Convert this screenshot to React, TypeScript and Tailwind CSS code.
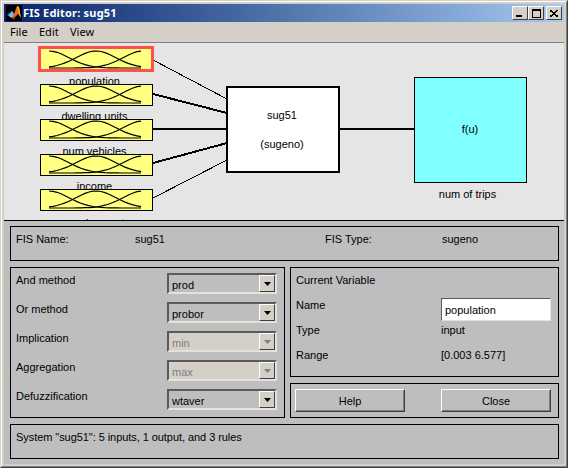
const sans = "font-['Liberation_Sans',Arial,sans-serif]";

// three gaussian membership curves, as the FIS editor draws them in each input box
function mfPoints(center: number) {
  const pts: string[] = [];
  for (let x = 8; x <= 102; x += 4) {
    const y = 18 - 17 * Math.exp(-((x - center) ** 2) / 800);
    pts.push(`${x},${y.toFixed(1)}`);
  }
  return pts.join(' ');
}

function InputNode({ top, selected }: { top: number; selected?: boolean }) {
  return (
    <div
      className={
        selected
          ? 'absolute left-[34px] w-[116px] h-[26px] border-[3px] border-[#ff5050] bg-[#ffff80]'
          : 'absolute left-[36px] w-[113px] h-[22px] border border-black bg-[#ffff80]'
      }
      style={{ top }}
    >
      <svg
        width="104"
        height="20"
        className={selected ? 'absolute left-0 top-[1px] overflow-visible' : 'absolute left-0 top-0 overflow-visible'}
      >
        <polyline points={mfPoints(8)} fill="none" stroke="#000" strokeWidth="1.2" />
        <polyline points={mfPoints(55)} fill="none" stroke="#000" strokeWidth="1.2" />
        <polyline points={mfPoints(102)} fill="none" stroke="#000" strokeWidth="1.2" />
      </svg>
    </div>
  );
}

function NodeLabel({ top, children }: { top: number; children: string }) {
  return (
    <div className="absolute left-[34px] w-[113px] text-center leading-[14px]" style={{ top }}>
      {children}
    </div>
  );
}

function Combo({ value, disabled }: { value: string; disabled?: boolean }) {
  return (
    <div
      className={`w-[110px] h-[21px] flex items-stretch border-2 border-t-[#5a5a5a] border-l-[#5a5a5a] border-r-[#e4e2dc] border-b-[#e4e2dc] ${
        disabled ? 'bg-[#d4d0c8] text-[#808080]' : 'bg-[#bebebe] text-black'
      }`}
    >
      <div className="flex-1 pl-[3px] pt-[3px] leading-[14px]">{value}</div>
      <div className="w-[16px] flex items-center justify-center bg-[#d4d0c8] border border-t-white border-l-white border-r-[#404040] border-b-[#404040]">
        <svg width="7" height="4" viewBox="0 0 7 4">
          <polygon points="0,0 7,0 3.5,4" fill={disabled ? '#808080' : '#000'} />
        </svg>
      </div>
    </div>
  );
}

function CaptionButton({ children, className }: { children: React.ReactNode; className?: string }) {
  return (
    <div
      className={`w-[16px] h-[14px] bg-[#d4d0c8] border border-t-white border-l-white border-r-[#404040] border-b-[#404040] flex ${className ?? ''}`}
    >
      {children}
    </div>
  );
}

function PushButton({ label }: { label: string }) {
  return (
    <button
      type="button"
      className="w-[110px] h-[23px] bg-[#bebebe] border border-t-white border-l-white border-r-[#404040] border-b-[#404040] shadow-[inset_-1px_-1px_0_#808080] leading-[14px]"
    >
      {label}
    </button>
  );
}

function MatlabIcon() {
  return (
    <svg width="16" height="16" viewBox="0 0 16 16" className="bg-black shrink-0">
      <polygon points="1,10 6,6 8,9 6,13" fill="#2d8fd5" />
      <polygon points="6,6 8,9 6,13 3,11" fill="#6fc3e8" />
      <polygon points="6,13 8,9 11,1 13,2 15,13 12,9 9,12" fill="#e8701a" />
      <polygon points="6,13 9,12 8,15" fill="#c23b12" />
      <polygon points="11,1 13,2 15,13 13,8" fill="#f6b23c" />
    </svg>
  );
}

export default function App() {
  return (
    <div className={`${sans} w-[568px] h-[468px] text-[11px] text-black bg-[#d4d0c8] border border-t-[#d4d0c8] border-l-[#d4d0c8] border-r-[#404040] border-b-[#404040]`}>
      <div className="w-full h-full border border-t-white border-l-white border-r-[#808080] border-b-[#808080] p-[2px] flex flex-col">
        {/* title bar */}
        <div className="h-[18px] shrink-0 flex items-center pl-[2px] pr-[2px] bg-gradient-to-r from-[#0a246a] to-[#a6caf0]">
          <MatlabIcon />
          <span className="ml-[1px] font-['Noto_Sans',sans-serif] font-bold text-[11px] tracking-[0.2px] text-white whitespace-nowrap">
            FIS Editor: sug51
          </span>
          <div className="ml-auto flex">
            <CaptionButton className="items-end pl-[3px] pb-[2px]">
              <div className="w-[6px] h-[2px] bg-black" />
            </CaptionButton>
            <CaptionButton className="items-center justify-center">
              <div className="w-[9px] h-[9px] border border-t-2 border-black" />
            </CaptionButton>
            <CaptionButton className="ml-[2px] items-center justify-center">
              <svg width="8" height="7" viewBox="0 0 8 7" shapeRendering="crispEdges">
                <path d="M0 0 L8 7 M8 0 L0 7" stroke="#000" strokeWidth="1.6" />
              </svg>
            </CaptionButton>
          </div>
        </div>

        {/* menu bar */}
        <div className="h-[21px] shrink-0 flex items-center border-b border-[#808080] pl-[6px] font-['Noto_Sans',sans-serif] text-[11px]">
          <span className="w-[29px]">File</span>
          <span className="w-[31px]">Edit</span>
          <span>View</span>
        </div>

        {/* system diagram */}
        <div className="relative h-[177px] shrink-0 bg-[#e5e5e5] overflow-hidden">
          <svg width="560" height="177" className="absolute left-0 top-0" shapeRendering="crispEdges">
            <line x1="149" y1="17" x2="223" y2="56" stroke="#000" strokeWidth="1" />
            <line x1="149" y1="51" x2="223" y2="70" stroke="#000" strokeWidth="2" />
            <line x1="149" y1="86" x2="223" y2="86" stroke="#000" strokeWidth="2" />
            <line x1="149" y1="120" x2="223" y2="100" stroke="#000" strokeWidth="2" />
            <line x1="149" y1="155" x2="223" y2="117" stroke="#000" strokeWidth="1" />
            <line x1="336" y1="86" x2="410" y2="86" stroke="#000" strokeWidth="2" />
          </svg>

          <NodeLabel top={31}>population</NodeLabel>
          <NodeLabel top={66}>dwelling units</NodeLabel>
          <NodeLabel top={101}>num vehicles</NodeLabel>
          <NodeLabel top={136}>income</NodeLabel>
          <NodeLabel top={173}>employment</NodeLabel>

          <InputNode top={3} selected />
          <InputNode top={41} />
          <InputNode top={76} />
          <InputNode top={111} />
          <InputNode top={146} />

          <div className="absolute left-[222px] top-[43px] w-[114px] h-[87px] border-2 border-black bg-white flex flex-col items-center pt-[20px] pr-[2px] leading-[14px]">
            <span>sug51</span>
            <span className="mt-[15px]">(sugeno)</span>
          </div>
          <div className="absolute left-[410px] top-[34px] w-[113px] h-[106px] border border-black bg-[#80ffff] flex items-center justify-center pb-[1px] pr-[1px]">
            f(u)
          </div>
          <div className="absolute left-[407px] top-[144px] w-[113px] text-center leading-[14px]">num of trips</div>
        </div>

        {/* controls */}
        <div className="flex-1 bg-[#bebebe] border-t border-black pt-[5px] pl-[6px] pr-[5px] flex flex-col gap-[6px]">
          <div className="h-[35px] border border-black pt-[5px] pl-[5px] flex leading-[14px]">
            <span className="w-[119px]">FIS Name:</span>
            <span className="w-[190px]">sug51</span>
            <span className="w-[117px]">FIS Type:</span>
            <span>sugeno</span>
          </div>

          <div className="flex gap-[5px]">
            <div className="w-[275px] h-[151px] border border-black pt-[5px] pl-[5px] pr-[7px] flex flex-col gap-[8px] leading-[14px]">
              {[
                { label: 'And method', value: 'prod' },
                { label: 'Or method', value: 'probor' },
                { label: 'Implication', value: 'min', disabled: true },
                { label: 'Aggregation', value: 'max', disabled: true },
                { label: 'Defuzzification', value: 'wtaver' },
              ].map((row) => (
                <div key={row.label} className="flex justify-between items-start">
                  <span>{row.label}</span>
                  <Combo value={row.value} disabled={row.disabled} />
                </div>
              ))}
            </div>

            <div className="flex-1 flex flex-col gap-[6px]">
              <div className="h-[110px] border border-black pt-[5px] pl-[5px] leading-[14px]">
                <div className="h-[25px]">Current Variable</div>
                <div className="h-[25px] flex">
                  <span className="w-[145px]">Name</span>
                  <div className="w-[110px] h-[23px] bg-white border border-t-[#5a5a5a] border-l-[#5a5a5a] border-r-[#e4e2dc] border-b-[#e4e2dc] pl-[3px] pt-[4px]">
                    population
                  </div>
                </div>
                <div className="h-[25px] flex">
                  <span className="w-[145px]">Type</span>
                  <span>input</span>
                </div>
                <div className="h-[25px] flex">
                  <span className="w-[145px]">Range</span>
                  <span>[0.003 6.577]</span>
                </div>
              </div>
              <div className="h-[35px] border border-black pt-[5px] pl-[4px] flex gap-[36px]">
                <PushButton label="Help" />
                <PushButton label="Close" />
              </div>
            </div>
          </div>

          <div className="h-[35px] border border-black pt-[5px] pl-[5px] leading-[14px] tracking-[-0.06px]">
            System "sug51": 5 inputs, 1 output, and 3 rules
          </div>
        </div>
      </div>
    </div>
  );
}
